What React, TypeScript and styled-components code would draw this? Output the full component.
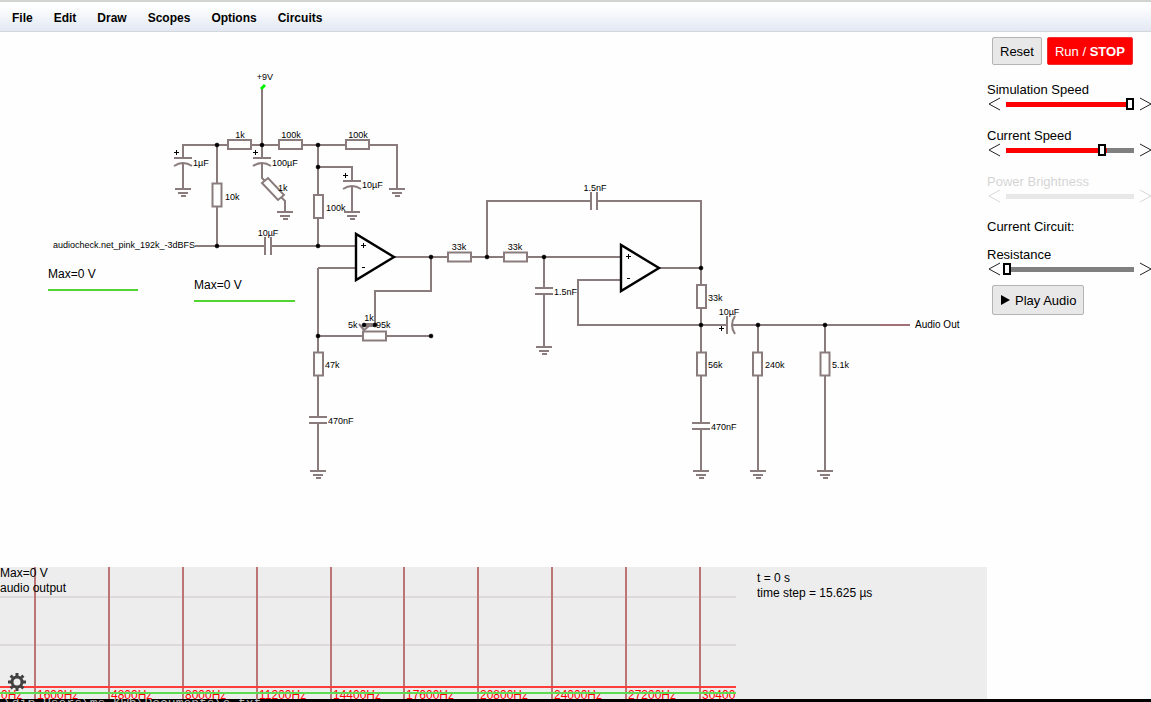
import React, { useState } from "react";
import styled, { createGlobalStyle, css } from "styled-components";

const WIRE = "#8a7c7c";
const TRACE = "#52d432";

const GlobalStyle = createGlobalStyle`
  *, *::before, *::after { box-sizing: border-box; }
  body {
    margin: 0;
    background: #fefefe;
    color: #000;
    font: 13px/15px "Liberation Sans", Arial, sans-serif;
  }
`;

const Page = styled.div`
  display: flex;
  flex-direction: column;
  min-height: 100vh;
`;

const MenuBar = styled.nav`
  display: flex;
  gap: 1px;
  height: 32px;
  padding: 3px 2px 0;
  border-top: 2px solid #d2d4d2;
  border-bottom: 1px solid #d4d6da;
  background: linear-gradient(#ffffff 0, #fcfdfe 20%, #e2e8f3 100%);
`;

const MenuItem = styled.button`
  padding: 0 10px;
  border: 0;
  background: none;
  color: #000;
  font: bold 12px/24px "Liberation Sans", Arial, sans-serif;
`;

const Workspace = styled.div`
  display: grid;
  grid-template-columns: minmax(0, 1fr) 164px;
  flex: 1;
`;

const CanvasColumn = styled.main`
  display: flex;
  flex-direction: column;
`;

const Schematic = styled.svg`
  display: block;
  width: 100%;
  height: auto;
  fill: none;
  stroke: ${WIRE};
  stroke-width: 2;
`;

const Label = styled.text<{ $size?: number }>`
  fill: #000;
  stroke: none;
  font-family: "Liberation Sans", Arial, sans-serif;
  font-size: ${(p) => p.$size ?? 9}px;
`;

const ScopePanel = styled.section`
  position: relative;
  display: grid;
  grid-template-columns: minmax(0, 1fr) 251px;
  background: #ededed;
`;

const ScopePlot = styled.svg`
  display: block;
  width: 100%;
  height: auto;
`;

const ScopeInfo = styled.div`
  padding: 4px 21px;
  font-size: 12px;
  line-height: 15px;
`;

const GearButton = styled.button`
  position: absolute;
  left: 7px;
  bottom: 7px;
  width: 20px;
  height: 20px;
  padding: 0;
  border: 0;
  background: none;

  svg { display: block; }
`;

const Sidebar = styled.aside`
  display: flex;
  flex-direction: column;
  padding-top: 5px;
`;

const ButtonRow = styled.div`
  display: flex;
  gap: 5px;
  padding: 0 5px;
`;

const buttonBase = css`
  display: flex;
  align-items: center;
  justify-content: center;
  padding: 0 7px;
  border-radius: 2px;
  font: 13px/15px "Liberation Sans", Arial, sans-serif;
  white-space: nowrap;
`;

const PlainButton = styled.button<{ $tall?: boolean }>`
  ${buttonBase}
  gap: 4px;
  height: ${(p) => (p.$tall ? 30 : 28)}px;
  border: 1px solid #b4b4b4;
  background: #e8e8e8;
  color: #000;
`;

const RunButton = styled.button`
  ${buttonBase}
  height: 28px;
  border: 1px solid #f03030;
  background: #ff0000;
  color: #fff;
  white-space: pre;
`;

const SliderGroup = styled.div<{ $tight?: boolean; $off?: boolean }>`
  display: flex;
  flex-direction: column;
  margin-top: ${(p) => (p.$tight ? 13 : 17)}px;
  opacity: ${(p) => (p.$off ? 0.17 : 1)};
`;

const SliderRow = styled.div`
  display: flex;
  align-items: center;
  gap: 6px;
  height: 14px;
  padding-left: 1px;
`;

const StepButton = styled.button`
  flex: none;
  padding: 0;
  border: 0;
  background: none;

  svg {
    display: block;
    fill: none;
    stroke: #222;
  }
`;

/* The thumb may overhang the left end of the bar by 3px. */
const Range = styled.input<{ $hideThumb?: boolean }>`
  flex: 1;
  min-width: 0;
  height: 12px;
  margin: 0 0 0 -3px;
  appearance: none;
  background: none;

  &::-webkit-slider-runnable-track {
    height: 5px;
    background:
      linear-gradient(to right, #ff0000 var(--fill), #808080 var(--fill))
      3px 0 no-repeat;
  }

  &::-webkit-slider-thumb {
    appearance: none;
    width: 8px;
    height: 12px;
    margin-top: -4px;
    border: 2px solid #000;
    background: #fff;
    visibility: ${(p) => (p.$hideThumb ? "hidden" : "visible")};
  }
`;

const CircuitName = styled.div`
  margin-top: 16px;
`;

const PlayRow = styled(ButtonRow)`
  margin-top: 9px;
`;

const Console = styled.footer`
  height: 3px;
  padding-left: 4px;
  overflow: hidden;
  background: #000;
  color: #b8b8b8;
  font: 13px/10px "Liberation Mono", monospace;
  white-space: pre;
`;

/* Circuit symbols. Each is centred on its x and y. */

function Resistor({ x, y, upright }: { x: number; y: number; upright?: boolean }) {
  const w = upright ? 9 : 23;
  const h = upright ? 23 : 9;
  return <rect x={x - w / 2} y={y - h / 2} width={w} height={h} fill="#fefefe" />;
}

function Ground({ x, y }: { x: number; y: number }) {
  return <path d={`M${x - 8} ${y}h16M${x - 5} ${y + 4}h10M${x - 2} ${y + 7}h5`} />;
}

function Capacitor({ x, y, upright }: { x: number; y: number; upright?: boolean }) {
  return upright ? (
    <>
      <path d={`M${x} ${y - 3}v6`} stroke="#fefefe" strokeWidth={4} />
      <path d={`M${x - 9} ${y - 3}h18M${x - 9} ${y + 3}h18`} />
    </>
  ) : (
    <>
      <path d={`M${x - 3} ${y}h6`} stroke="#fefefe" strokeWidth={4} />
      <path d={`M${x - 3} ${y - 9}v18M${x + 3} ${y - 9}v18`} />
    </>
  );
}

/* Polarity mark, drawn on the pixel grid around (x, y). */
function Plus({ x, y }: { x: number; y: number }) {
  return <path d={`M${x - 2} ${y + 0.5}h5M${x + 0.5} ${y - 2}v5`} stroke="#000" strokeWidth={1} />;
}

function PolarCapacitor({ x, y }: { x: number; y: number }) {
  return (
    <>
      <path d={`M${x} ${y - 3}v5`} stroke="#fefefe" strokeWidth={4} />
      <path d={`M${x - 9} ${y - 3}h18M${x - 9} ${y + 5}q9 -6 18 0`} />
      <Plus x={x - 7} y={y - 9} />
    </>
  );
}

function OpAmp({ x, y }: { x: number; y: number }) {
  return (
    <g stroke="#000">
      <path d={`M${x} ${y - 23}v46l38 -23z`} fill="#fefefe" strokeWidth={2.4} />
      <Plus x={x + 7} y={y - 12} />
      <path d={`M${x + 6} ${y + 10.5}h3`} strokeWidth={1} />
    </g>
  );
}

const nodes = [
  [217, 145], [262, 145], [318, 145], [318, 167], [217, 246], [318, 246],
  [431, 257], [487, 257], [544, 257], [701, 268], [318, 336], [431, 336],
  [364, 325], [375, 325], [701, 325], [758, 325], [825, 325],
];

const wires = [
  "M183 189V145H397V189",
  "M262 88V178l4 4M281 197l4 4V212",
  "M217 145V246M318 145V246M318 167H352V212",
  "M195 246H356M318 268H356M318 268V471M318 336H431",
  "M394 257H620M431 257V291H375V325",
  "M544 257V347M487 257V201H701V471",
  "M620 280H578V325H910M658 268H701",
  "M758 325V471M825 325V471",
];

const labels: { x: number; y: number; text: string; middle?: boolean }[] = [
  { x: 265, y: 80, text: "+9V", middle: true },
  { x: 240, y: 138, text: "1k", middle: true },
  { x: 291, y: 138, text: "100k", middle: true },
  { x: 358, y: 138, text: "100k", middle: true },
  { x: 193, y: 166, text: "1µF" },
  { x: 272, y: 166, text: "100µF" },
  { x: 362, y: 188, text: "10µF" },
  { x: 278, y: 191, text: "1k" },
  { x: 225, y: 200, text: "10k" },
  { x: 326, y: 211, text: "100k" },
  { x: 268, y: 236, text: "10µF", middle: true },
  { x: 53, y: 248, text: "audiocheck.net_pink_192k_-3dBFS" },
  { x: 459, y: 250, text: "33k", middle: true },
  { x: 515, y: 250, text: "33k", middle: true },
  { x: 595, y: 191, text: "1.5nF", middle: true },
  { x: 554, y: 295, text: "1.5nF" },
  { x: 369, y: 321, text: "1k", middle: true },
  { x: 348, y: 328, text: "5k" },
  { x: 376, y: 328, text: "95k" },
  { x: 708, y: 301, text: "33k" },
  { x: 729, y: 315, text: "10µF", middle: true },
  { x: 325, y: 368, text: "47k" },
  { x: 708, y: 368, text: "56k" },
  { x: 765, y: 368, text: "240k" },
  { x: 832, y: 368, text: "5.1k" },
  { x: 328, y: 424, text: "470nF" },
  { x: 711, y: 430, text: "470nF" },
];

function CircuitDiagram() {
  return (
    <Schematic viewBox="0 32 987 535" role="img" aria-label="Circuit schematic">
      {wires.map((d) => (
        <path key={d} d={d} />
      ))}
      <path d="M261 89l4 -4" stroke="#00f000" strokeWidth={3} />
      <path d="M880 325H910" stroke="#a07078" />

      <Resistor x={239.5} y={144.5} />
      <Resistor x={290.5} y={144.5} />
      <Resistor x={357.5} y={144.5} />
      <Resistor x={217} y={195} upright />
      <Resistor x={318.5} y={206.5} upright />
      <path d="M262 183l6 -5l16 17l-6 5z" fill="#fefefe" />
      <Resistor x={459.5} y={257} />
      <Resistor x={515.5} y={257} />
      <Resistor x={701.5} y={296.5} upright />
      <Resistor x={318.5} y={364} upright />
      <Resistor x={701.5} y={364} upright />
      <Resistor x={757.5} y={364} upright />
      <Resistor x={825} y={364} upright />

      <path d="M364 325H375" strokeWidth={4} />
      <path d="M359 324l5 6l5 -4" />
      <Resistor x={374.5} y={336} />

      <PolarCapacitor x={183} y={161} />
      <PolarCapacitor x={262} y={161} />
      <PolarCapacitor x={352} y={184} />
      <Capacitor x={268} y={246} />
      <Capacitor x={594} y={201} />
      <Capacitor x={544} y={291} upright />
      <Capacitor x={318} y={420} upright />
      <Capacitor x={701} y={426} upright />
      <path d="M727 325h5" stroke="#fefefe" strokeWidth={4} />
      <path d="M727 316v18M735 316q-6 9 0 18" />
      <Plus x={721} y={328} />

      <Ground x={183} y={189} />
      <Ground x={285} y={212} />
      <Ground x={352} y={212} />
      <Ground x={397} y={189} />
      <Ground x={544} y={347} />
      <Ground x={318} y={471} />
      <Ground x={701} y={471} />
      <Ground x={758} y={471} />
      <Ground x={825} y={471} />

      <OpAmp x={356} y={257} />
      <OpAmp x={621} y={268} />

      {nodes.map(([x, y]) => (
        <circle key={`${x}-${y}`} cx={x} cy={y} r={2} fill="#000" stroke="#000" strokeWidth={0.5} />
      ))}

      {labels.map((l) => (
        <Label key={`${l.x}-${l.y}`} x={l.x} y={l.y} textAnchor={l.middle ? "middle" : "start"}>
          {l.text}
        </Label>
      ))}
      <Label x={915} y={328} $size={10}>Audio Out</Label>
      <Label x={48} y={278} $size={12}>Max=0 V</Label>
      <Label x={194} y={289} $size={12}>Max=0 V</Label>
      <path d="M48 290H138M194 301H295" stroke={TRACE} />
    </Schematic>
  );
}

const frequencies = [
  { x: 35, text: "1600Hz" },
  { x: 109, text: "4800Hz" },
  { x: 183, text: "8000Hz" },
  { x: 257, text: "11200Hz" },
  { x: 331, text: "14400Hz" },
  { x: 404, text: "17600Hz" },
  { x: 478, text: "20800Hz" },
  { x: 552, text: "24000Hz" },
  { x: 626, text: "27200Hz" },
  { x: 700, text: "30400" },
];

const FreqLabel = styled(Label)`
  fill: #ff0000;
`;

function SpectrumScope() {
  return (
    <ScopePanel>
      <ScopePlot viewBox="0 0 736 132" role="img" aria-label="Audio output spectrum">
        <g fill="none" strokeWidth={2}>
          <path d="M0 30H736M0 78H736" stroke="#dcd8dc" />
          {frequencies.map((f) => (
            <path key={f.x} d={`M${f.x} 0V132`} stroke="#bd7474" />
          ))}
        </g>
        <FreqLabel x={1} y={132} $size={12}>0Hz</FreqLabel>
        {frequencies.map((f) => (
          <FreqLabel key={f.x} x={f.x + 2} y={132} $size={12}>{f.text}</FreqLabel>
        ))}
        <path d="M0 120H736" stroke="#ff3c3c" strokeWidth={2} />
        <path d="M0 126H736" stroke="#5cdc50" strokeWidth={2} />
        <Label x={0} y={10} $size={12}>Max=0 V</Label>
        <Label x={0} y={25} $size={12}>audio output</Label>
      </ScopePlot>
      <ScopeInfo>
        <div>t = 0 s</div>
        <div>time step = 15.625 µs</div>
      </ScopeInfo>
      <GearButton type="button" aria-label="Scope settings">
        <svg width="20" height="20" viewBox="-10 -10 20 20" fill="none" stroke="#404040">
          <circle r="5" strokeWidth="3" />
          {[0, 45, 90, 135, 180, 225, 270, 315].map((a) => (
            <path key={a} d="M0 -6V-9" strokeWidth="3" transform={`rotate(${a})`} />
          ))}
        </svg>
      </GearButton>
    </ScopePanel>
  );
}

interface SliderProps {
  id: string;
  label: string;
  initial: number;
  disabled?: boolean;
  tight?: boolean;
}

function Slider({ id, label, initial, disabled, tight }: SliderProps) {
  const [value, setValue] = useState(initial);
  const step = (by: number) => setValue((v) => Math.max(0, Math.min(100, v + by)));
  return (
    <SliderGroup $tight={tight} $off={disabled}>
      <label htmlFor={id}>{label}</label>
      <SliderRow>
        <StepButton type="button" aria-label={`Decrease ${label}`} disabled={disabled} onClick={() => step(-1)}>
          <svg width="12" height="14" viewBox="0 0 12 14"><path d="M12 1L1 7l11 6" /></svg>
        </StepButton>
        <Range
          id={id}
          type="range"
          min={0}
          max={100}
          value={value}
          disabled={disabled}
          $hideThumb={disabled}
          style={{ "--fill": `${value}%` } as React.CSSProperties}
          onChange={(e) => setValue(Number(e.target.value))}
        />
        <StepButton type="button" aria-label={`Increase ${label}`} disabled={disabled} onClick={() => step(1)}>
          <svg width="11" height="14" viewBox="0 0 11 14"><path d="M0 1l11 6l-11 6" /></svg>
        </StepButton>
      </SliderRow>
    </SliderGroup>
  );
}

const menus = ["File", "Edit", "Draw", "Scopes", "Options", "Circuits"];

export default function App() {
  return (
    <Page>
      <GlobalStyle />
      <MenuBar>
        {menus.map((m) => (
          <MenuItem key={m} type="button">{m}</MenuItem>
        ))}
      </MenuBar>
      <Workspace>
        <CanvasColumn>
          <CircuitDiagram />
          <SpectrumScope />
        </CanvasColumn>
        <Sidebar>
          <ButtonRow>
            <PlainButton type="button">Reset</PlainButton>
            <RunButton type="button">Run / <b>STOP</b></RunButton>
          </ButtonRow>
          <Slider id="sim-speed" label="Simulation Speed" initial={100} />
          <Slider id="current-speed" label="Current Speed" initial={77} />
          <Slider id="power-brightness" label="Power Brightness" initial={0} disabled />
          <CircuitName>Current Circuit:</CircuitName>
          <Slider id="resistance" label="Resistance" initial={0} tight />
          <PlayRow>
            <PlainButton type="button" $tall>
              <svg width="11" height="12" viewBox="0 0 11 12" aria-hidden="true">
                <path d="M1 1l9 5l-9 5z" fill="#000" />
              </svg>
              Play Audio
            </PlainButton>
          </PlayRow>
        </Sidebar>
      </Workspace>
      <Console>{"\\dip Users\\ms KWb\\Documents\\e.txt"}</Console>
    </Page>
  );
}
